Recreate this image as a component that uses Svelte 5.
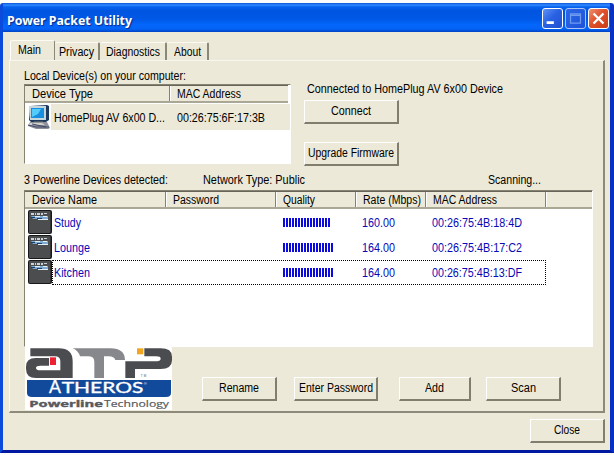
<script>
  const tabs = [
    { label: 'Main', text: 23, width: 45, active: true },
    { label: 'Privacy', text: 35, width: 45 },
    { label: 'Diagnostics', text: 54, width: 67 },
    { label: 'About', text: 27, width: 42 }
  ];
  const columns = [
    { label: 'Device Name', text: 65, width: 141 },
    { label: 'Password', text: 46, width: 110 },
    { label: 'Quality', text: 32, width: 80 },
    { label: 'Rate (Mbps)', text: 58, width: 70 },
    { label: 'MAC Address', text: 64, width: 120 }
  ];
  const devices = [
    { name: 'Study', text: 27, bars: 16, rate: '160.00', mac: '00:26:75:4B:18:4D', macText: 90 },
    { name: 'Lounge', text: 36, bars: 17, rate: '164.00', mac: '00:26:75:4B:17:C2', macText: 90 },
    { name: 'Kitchen', text: 36, bars: 17, rate: '164.00', mac: '00:26:75:4B:13:DF', macText: 90, focused: true }
  ];

  // Condenses a label so that it takes the given width.
  function fit(node, width) {
    const natural = node.getBoundingClientRect().width;
    node.style.width = `${width}px`;
    node.style.transform = `scaleX(${width / natural})`;
  }
</script>

{#snippet label(text, width)}<span class="label" use:fit={width}>{text}</span>{/snippet}

{#snippet button(text, textWidth, width)}
  <button style:width="{width}px">{@render label(text, textWidth)}</button>
{/snippet}

<main>
  <header>
    <h1>{@render label('Power Packet Utility', 125)}</h1>
    <div class="controls">
      <svg class="ctl" viewBox="0 0 21 21"><path d="M4 15h8" stroke="#fff" stroke-width="3" /></svg>
      <svg class="ctl dim" viewBox="0 0 21 21"><path d="M5 5.500h11v10H5zM5 7h11" fill="none" stroke="#6f9bf0" stroke-width="1.4" /></svg>
      <svg class="ctl red" viewBox="0 0 21 21"><path d="M5 5l11 11M16 5L5 16" stroke="#fff" stroke-width="2.600" /></svg>
    </div>
  </header>

  <div class="client">
    <nav>
      {#each tabs as tab}
        <div class="tab" class:active={tab.active} style:width="{tab.width}px">{@render label(tab.label, tab.text)}</div>
      {/each}
    </nav>
    <section class="panel">
      <div class="top">
        <div class="local">
          <div class="caption">{@render label('Local Device(s) on your computer:', 162)}</div>
          <div class="list small">
            <div class="head">
              <div class="th" style:width="145px">{@render label('Device Type', 61)}</div>
              <div class="th last">{@render label('MAC Address', 64)}</div>
            </div>
            <div class="adapter">
              <svg width="24" height="26" viewBox="0 0 24 26">
                <path d="M3 2L20 1l2 1v14l-3 2H4L2 16z" fill="#1c3a5e" />
                <path d="M2 2h17v14H3z" fill="#c5d6dc" />
                <path d="M4 4h13v10H4z" fill="#178fe0" />
                <path d="M5 5h9l-3 5-6 3z" fill="#54cbfa" />
                <path d="M7 17h9v2H7z" fill="#535762" />
                <path d="M3 18h17l3 6-2 1H9l-8-3z" fill="#8f919a" />
                <path d="M3 19h12l3 2H2z" fill="#d1d0cb" />
                <path d="M1 21l8 2h13M5 20l14 3" stroke="#444b68" fill="none" />
              </svg>
              <div class="adapter-name">{@render label('HomePlug AV 6x00 D...', 111)}</div>
              <div class="adapter-mac">{@render label('00:26:75:6F:17:3B', 88)}</div>
            </div>
          </div>
        </div>
        <div class="connection">
          <div class="status">{@render label('Connected to HomePlug AV 6x00 Device', 196)}</div>
          {@render button('Connect', 40, 95)}
          {@render button('Upgrade Firmware', 86, 95)}
        </div>
      </div>

      <div class="info">
        <div class="count">{@render label('3 Powerline Devices detected:', 144)}</div>
        <div class="type">{@render label('Network Type: Public', 102)}</div>
        <div>{@render label('Scanning...', 53)}</div>
      </div>

      <div class="list big">
        <div class="head">
          {#each columns as col}
            <div class="th" style:width="{col.width}px">{@render label(col.label, col.text)}</div>
          {/each}
          <div class="th last"></div>
        </div>
        {#each devices as device}
          <div class="device">
            <svg width="24" height="24" viewBox="0 0 24 24">
              <rect width="24" height="24" rx="2" fill="#171819" />
              <rect x="1" y="1" width="21.500" height="22" rx="1" fill="#4c4d4f" />
              <path d="M3 3h3v2H3zM7 3h1v2H7zM9 3h3v2H9zM13 3h2v2h-2zM16 3h3v1h-3z" fill="#cbd1d6" />
              <path d="M3 6h17v3H5z" fill="#7fa9d0" />
              <path d="M3 7h4v1H3zM9 8h5v1H9z" fill="#17416b" />
              <path d="M7 6h5v1H7zM15 6h4v1h-4zM10 9h10v1H10z" fill="#e5eef2" />
            </svg>
            <div class="cells" class:focused={device.focused}>
              <div class="name">{@render label(device.name, device.text)}</div>
              <div class="quality">
                {#each Array(device.bars) as _}<i></i>{/each}
              </div>
              <div class="rate">{@render label(device.rate, 33)}</div>
              <div>{@render label(device.mac, device.macText)}</div>
            </div>
          </div>
        {/each}
      </div>

      <div class="bottom">
        <svg class="logo" width="147" height="63" viewBox="75 51 441 189" preserveAspectRatio="none">
          <rect x="75" y="51" width="441" height="189" fill="#fff" />
          <path d="M91 55H176Q218 55 218 94V144H108Q78 144 78 116V110Q78 84 107 84H147V107H121Q108 107 108 114Q108 121 121 121H181V94Q181 79 164 79H91Z" fill="#4b4c50" />
          <rect x="150" y="82" width="18" height="23" fill="#ee2033" />
          <path d="M218 55H332Q374 55 375 90H346Q342 79 327 79H312V144H283V95Q283 79 264 79H240Q235 62 218 55Z" fill="#87888c" />
          <path d="M433 55H482Q516 55 516 80V91Q516 117 482 117H405V144H376V94H466Q482 94 482 86Q482 79 468 79H433Z" fill="#4b4c50" />
          <rect x="411" y="55" width="19" height="18" fill="#f2a51e" />
          <text x="422" y="140" font-size="9" fill="#555" textLength="17">TM</text>
          <path d="M81 150H513V189Q513 201 498 201H96Q81 201 81 189Z" fill="#124a9b" />
          <text x="147" y="190" fill="#fff" stroke="#fff" class="brand" font-size="53">A</text>
          <text x="185" y="190" fill="#fff" stroke="#fff" class="brand" font-size="45" textLength="245" lengthAdjust="spacingAndGlyphs">THEROS</text>
          <text x="431" y="164" fill="#fff" font-size="12">®</text>
          <text x="88" y="230" fill="#58595c" stroke="#58595c" stroke-width="1" class="sans" font-weight="700" font-size="24" textLength="221" lengthAdjust="spacingAndGlyphs">Powerline</text>
          <text x="312" y="230" fill="#58595c" stroke="#58595c" stroke-width=".5" class="sans" font-size="26" textLength="195" lengthAdjust="spacingAndGlyphs">Technology</text>
        </svg>
        <div class="actions">
          {@render button('Rename', 40, 75)}
          {@render button('Enter Password', 74, 84)}
          {@render button('Add', 19, 72)}
          {@render button('Scan', 25, 75)}
        </div>
      </div>
    </section>
    <footer>{@render button('Close', 26, 75)}</footer>
  </div>
</main>

<style>
  :global(body) { margin: 0; background: #fdfdfb; overflow: hidden; }
  * { box-sizing: border-box; }
  main {
    width: 614px; height: 450px; margin-top: 3px;
    display: flex; flex-direction: column;
    background: #ece9d8;
    border: solid #0831d9; border-width: 0 4px 3px 3px;
    border-color: #0a48dc #0831c4 #0019a0 #0b4bdc;
    border-radius: 3px 3px 0 0;
    font: 12px/14px "Liberation Sans", Arial, sans-serif;
    color: #000; overflow: hidden;
  }
  .label { display: inline-block; white-space: pre; transform-origin: 0 50%; }
  header {
    height: 29px; flex: none; margin: 0 -4px 0 -3px; padding: 4px 5px 0 7px;
    display: flex; justify-content: space-between;
    background: linear-gradient(#0a50d8 0, #318cff 2px, #0862ee 4px, #0055e0 8px, #0058e6 16px, #0466fc 22px, #0463f5 26px, #0043c4 29px);
  }
  h1 { margin: 5px 0 0; font: bold 13px/16px "Noto Sans", "Open Sans", sans-serif; color: #fff; text-shadow: 1px 1px 1px #0a2a88; }
  .controls { display: flex; gap: 2px; padding-top: 1px; }
  .ctl { width: 21px; height: 21px; border: 1px solid #fff; border-radius: 3px; background: linear-gradient(135deg, #5f93f5, #2a62e4 45%, #1f50cf); }
  .ctl.dim { border-color: #a9c4f5; background: linear-gradient(135deg, #2a67e8, #1e52d8); }
  .ctl.red { background: linear-gradient(135deg, #ee9075, #e0512b 45%, #c93d16); }
  .client { padding: 8px 5px 0 6px; flex: 1; }
  nav { display: flex; align-items: flex-end; height: 20px; padding-left: 1px; }
  .tab {
    height: 18px; display: flex; justify-content: center; align-items: center;
    border-top: 1px solid #fbfaf3; border-right: 2px solid #8b8878; border-radius: 2px 2px 0 0;
  }
  .tab:nth-child(n + 2) { padding-top: 1px; }
  .tab.active { height: 20px; border-left: 1px solid #fff; padding: 0 7px 2px 0; border-right-width: 1px; }
  .panel {
    width: 596px; height: 353px; padding-left: 14px;
    border: solid; border-width: 1px 2px 2px 1px; border-color: #f8f7ef #8d8a7b #8d8a7b #faf9f3;
  }
  .top { display: flex; height: 103px; }
  .local { width: 280px; }
  .caption { height: 23px; padding-top: 8px; }
  .list { background: #fff; border: solid; border-width: 1px; border-color: #85826f #fff #fff #85826f; }
  .small { width: 267px; height: 80px; }
  .big { width: 569px; height: 157px; }
  .head { display: flex; height: 18px; background: #ece9d8; border-top: 1px solid #68665a; border-bottom: 2px solid #aaa795; }
  .small .head { width: 263px; }
  .big .head { width: 567px; }
  .th { height: 15px; padding: 1px 0 0 7px; border-right: 1px solid #85826f; box-shadow: 1px 0 #fff; flex: none; }
  .th.last { border: 0; box-shadow: none; flex: 1; padding-left: 7px; }
  .adapter { display: flex; height: 26px; margin-top: 1px; padding-left: 2px; }
  .adapter-name, .adapter-mac { background: #ece9d8; padding-top: 7px; }
  .adapter-name { width: 126px; padding-left: 3px; }
  .adapter-mac { flex: 1; }
  .connection { display: flex; flex-direction: column; align-items: flex-start; gap: 18px; }
  .status { height: 21px; padding: 21px 0 0 3px; white-space: nowrap; }
  .info { display: flex; height: 26px; padding-top: 9px; }
  .count { width: 179px; }
  .type { width: 285px; }
  .device { display: flex; height: 25px; padding: 1px 0 0 3px; color: #0808b5; }
  .cells { display: flex; align-items: center; width: 494px; height: 25px; padding-left: 1px; border: 1px solid transparent; }
  .focused { border: 1px dotted #000; }
  .name { width: 229px; }
  .quality { width: 79px; height: 9px; display: flex; gap: 1px; }
  .quality i { width: 2px; height: 9px; background: #0b0be0; }
  .rate { width: 70px; }
  .bottom { display: flex; }
  .logo { flex: none; margin-left: 1px; }
  .actions { display: flex; padding: 30px 0 0 30px; }
  .actions :global(button:nth-child(2)) { margin-left: 17px; }
  .actions :global(button:nth-child(3)) { margin-left: 21px; }
  .actions :global(button:nth-child(4)) { margin-left: 15px; }
  button {
    height: 24px; flex: none; padding: 0 0 1px; display: flex; align-items: center; justify-content: center;
    font: inherit; color: #000; background: #ece9d8;
    border: solid; border-width: 1px 2px 2px 1px; border-color: #fff #817e6e #817e6e #fff; white-space: nowrap;
  }
  .brand { font-family: Lato, sans-serif; }
  .sans { font-family: "Open Sans", sans-serif; }
  footer { display: flex; justify-content: flex-end; padding-top: 6px; }
</style>
